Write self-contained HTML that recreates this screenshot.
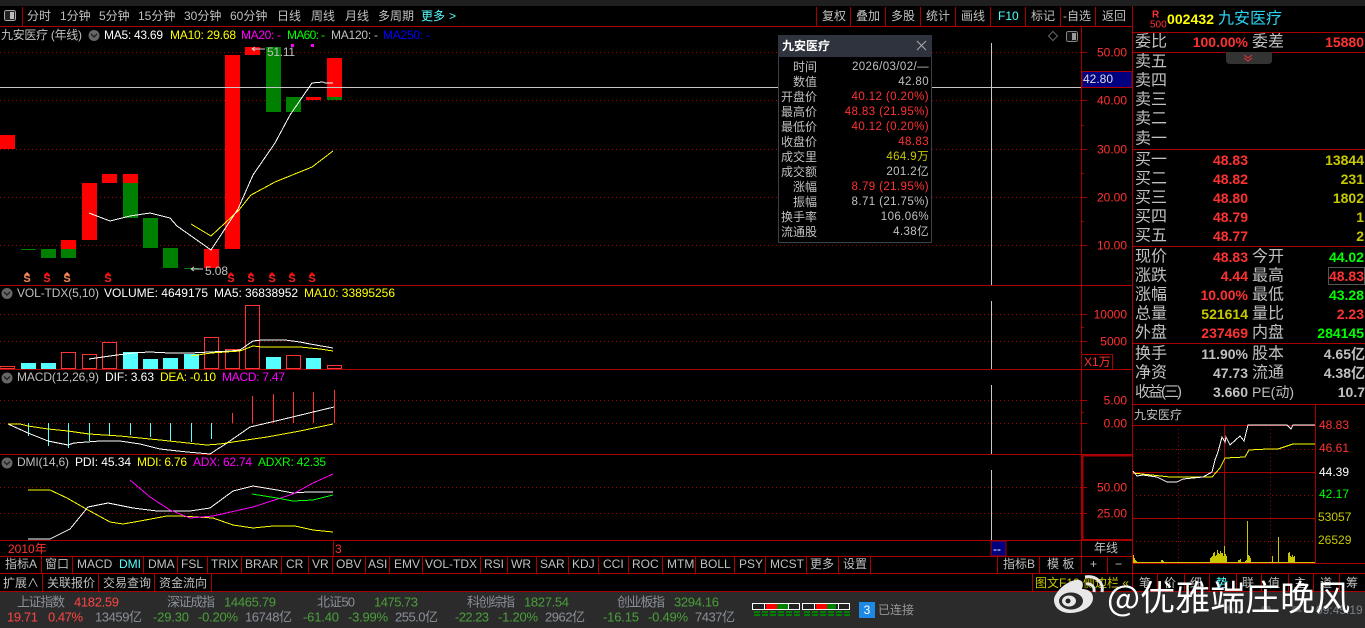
<!DOCTYPE html>
<html><head><meta charset="utf-8"><style>
html,body{margin:0;padding:0;background:#000;width:1365px;height:628px;overflow:hidden}
svg{display:block}
text{font-family:"Liberation Sans","WenQuanYi Zen Hei","Noto Sans CJK SC",sans-serif;font-size:12px;fill:#c0c0c0;dominant-baseline:central;white-space:pre}
.l{stroke:#a00;stroke-width:1;shape-rendering:crispEdges;fill:none}
.d{stroke:#a00;stroke-width:1;stroke-dasharray:1 3;shape-rendering:crispEdges;fill:none}
.p{fill:none;stroke-width:1;shape-rendering:crispEdges}
.c{shape-rendering:crispEdges}
.r{fill:#ff3232}.y{fill:#ff0}.w{fill:#fff}.g{fill:#0f0}.m{fill:#f0f}.b{fill:#00f}.cy{fill:#5ff}.dy{fill:#c8c800}
.e{text-anchor:end}.big{font-size:16px}
.bd{font-weight:bold;font-size:14px}
.pv{font-size:11.5px;letter-spacing:.4px}
.st text{font-size:13px}.sg{fill:#4aa03a}.sr{fill:#f44}.sh{fill:#8a8f98}
</style></head><body>
<svg width="1365" height="628" viewBox="0 0 1365 628" xmlns="http://www.w3.org/2000/svg">
<rect width="1365" height="628" fill="#000"/>
<rect width="1365" height="6" fill="#1f1f1f"/>

<!-- main frame lines -->
<path class="l" d="M0 26.5H1132M0 285.5H1132M0 369.5H1132M0 454.5H1132M0 540.5H1132M0 556.5H1132M0 573.5H1365M1081.5 26V556M1132.5 6V573M22.5 7V26M816.5 7V26M850.5 7V26M885.5 7V26M920.5 7V26M955.5 7V26M990.5 7V26M1025.5 7V26M1060.5 7V26M1095.5 7V26"/>
<path class="l" d="M1132 32.5H1365M1132 52.5H1365M1132 149.5H1365M1132 246.5H1365M1132 343.5H1365M1132 404.5H1365"/>
<path d="M1082 455.5H1132M1082 539.5H1132M1082.5 455V540" stroke="#a00" stroke-width="1.5" fill="none" class="c"/>

<!-- toolbar -->
<rect x="4.500" y="10.500" width="11" height="10" rx="2" fill="#222" stroke="#aaa" class="c"/><rect x="10" y="12" width="4" height="7" fill="#bbb" class="c"/>
<text x="27" y="16">分时</text><text x="60" y="16">1分钟</text><text x="99" y="16">5分钟</text><text x="138" y="16">15分钟</text><text x="184" y="16">30分钟</text><text x="230" y="16">60分钟</text><text x="277" y="16">日线</text><text x="311" y="16">周线</text><text x="345" y="16">月线</text><text x="378" y="16">多周期</text><text x="421" y="16" class="cy">更多</text><text x="449" y="16" class="cy">&gt;</text>
<text x="822" y="16">复权</text><text x="856" y="16">叠加</text><text x="891" y="16">多股</text><text x="926" y="16">统计</text><text x="961" y="16">画线</text><text x="998" y="16" class="cy">F10</text><text x="1031" y="16">标记</text><text x="1063" y="16">-自选</text><text x="1102" y="16">返回</text>

<!-- main header -->
<text x="1" y="35" textLength="81">九安医疗 (年线)</text>
<circle cx="94" cy="35.500" r="5.500" fill="#666"/><path d="M91 34l3 3 3-3" stroke="#222" stroke-width="1.500" fill="none"/>
<text x="104" y="35" class="w" textLength="59">MA5: 43.69</text><text x="170" y="35" class="y" textLength="66">MA10: 29.68</text><text x="241" y="35" class="m" textLength="40">MA20: -</text><text x="287" y="35" class="g" textLength="38">MA60: -</text><text x="331" y="35" textLength="47">MA120: -</text><text x="383" y="35" class="b" textLength="47">MA250: -</text>
<path d="M1048.500 36l4.500-4.500 4.500 4.500-4.500 4.500z" fill="none" stroke="#666"/>
<rect x="1066.500" y="31.500" width="11" height="10" rx="2" fill="#111" stroke="#888" class="c"/><rect x="1072" y="33" width="4" height="7" fill="#999" class="c"/>

<!-- grids -->
<path class="d" d="M0 52.500H1081M0 100.500H1081M0 149.500H1081M0 197.500H1081M0 245.500H1081M0 314.500H1081M0 341.500H1081M0 400.500H1081M0 423.500H1081M0 487.500H1081M0 513.500H1081"/>

<!-- candles -->
<g class="c">
<g fill="#f00"><rect x="0" y="135" width="15" height="14"/><rect x="61" y="240" width="15" height="9"/><rect x="82" y="183" width="15" height="57"/><rect x="102" y="174" width="15" height="9"/><rect x="123" y="174" width="15" height="9"/><rect x="204" y="249" width="15" height="19"/><rect x="225" y="55" width="15" height="194"/><rect x="245" y="47" width="15" height="8"/><rect x="306" y="97" width="15" height="3"/><rect x="327" y="58" width="15" height="39"/></g>
<g fill="#008000"><rect x="21" y="249" width="15" height="1"/><rect x="41" y="249" width="15" height="9"/><rect x="61" y="249" width="15" height="9"/><rect x="123" y="183" width="15" height="35"/><rect x="143" y="218" width="15" height="30"/><rect x="163" y="248" width="15" height="20"/><rect x="184" y="268" width="15" height="1"/><rect x="266" y="47" width="15" height="65"/><rect x="286" y="97" width="15" height="15"/><rect x="327" y="97" width="15" height="3"/></g>
<rect x="291" y="44" width="3" height="3" fill="#f0f"/><rect x="311" y="44" width="3" height="3" fill="#f0f"/>
</g>
<path d="M0 87.500H1081" stroke="#c8c8c8" class="c"/>
<polyline class="p" stroke="#ff0" points="191,224 211,236 239,210 251,195 275,182 312,167 333,151"/>
<polyline class="p" stroke="#fff" points="89,213 110,221 130,216 150,213 170,218 177,226 211,250 238,209 253,175 275,143 290,115 312,83 323,82 325,83 333,83"/>
<path d="M252 49l3-2M252 49l3 2M252 49h13" stroke="#ccc" fill="none"/><text x="267" y="52" style="font-size:12px" textLength="28">51.11</text>
<path d="M191 269l3-2M191 269l3 2M191 269h12" stroke="#ccc" fill="none"/><text x="205" y="271" style="font-size:12px" textLength="23">5.08</text>

<!-- S markers -->
<g style="font-weight:bold" text-anchor="middle">
<path d="M24 275l3-3 3 3zM64 275l3-3 3 3z" fill="#f85"/><path d="M44 275l3-3 3 3zM105 275l3-3 3 3zM228 275l3-3 3 3zM248 275l3-3 3 3zM269 275l3-3 3 3zM289 275l3-3 3 3zM309 275l3-3 3 3z" fill="#f00"/>
<text x="27" y="279" style="fill:#f85;font-size:11px;font-weight:bold">S</text><text x="67" y="279" style="fill:#f85;font-size:11px;font-weight:bold">S</text>
<text x="47" y="279" style="fill:#f22;font-size:11px;font-weight:bold">S</text><text x="108" y="279" style="fill:#f22;font-size:11px;font-weight:bold">S</text><text x="231" y="279" style="fill:#f22;font-size:11px;font-weight:bold">S</text><text x="251" y="279" style="fill:#f22;font-size:11px;font-weight:bold">S</text><text x="272" y="279" style="fill:#f22;font-size:11px;font-weight:bold">S</text><text x="292" y="279" style="fill:#f22;font-size:11px;font-weight:bold">S</text><text x="312" y="279" style="fill:#f22;font-size:11px;font-weight:bold">S</text>
</g>

<!-- volume -->
<circle cx="7" cy="293.500" r="5.500" fill="#666"/><path d="M4 292l3 3 3-3" stroke="#222" stroke-width="1.500" fill="none"/>
<text x="17" y="293" textLength="82">VOL-TDX(5,10)</text><text x="104" y="293" class="w" textLength="104">VOLUME: 4649175</text><text x="214" y="293" class="w" textLength="84">MA5: 36838952</text><text x="304" y="293" class="y" textLength="91">MA10: 33895256</text>
<g class="c" fill="#55ffff"><rect x="21" y="363" width="15" height="6"/><rect x="41" y="363" width="15" height="6"/><rect x="123" y="352" width="15" height="17"/><rect x="143" y="359" width="15" height="10"/><rect x="163" y="358" width="15" height="11"/><rect x="184" y="354" width="15" height="15"/><rect x="266" y="357" width="15" height="12"/><rect x="306" y="358" width="15" height="11"/></g>
<g class="c" fill="none" stroke="#f33"><rect x="0" y="366.500" width="14.500" height="2"/><rect x="61.500" y="352.500" width="14" height="16"/><rect x="82.500" y="354.500" width="14" height="14"/><rect x="102.500" y="342.500" width="14" height="26"/><rect x="204.500" y="337.500" width="14" height="31"/><rect x="225.500" y="349.500" width="14" height="19"/><rect x="245.500" y="305.500" width="14" height="63"/><rect x="286.500" y="355.500" width="14" height="13"/><rect x="327.500" y="365.500" width="14" height="3"/></g>
<polyline class="p" stroke="#fff" points="89,359 117,355 133,353 149,352 170,353 190,353 230,351 240,350 253,341 262,340 285,340 300,342 310,344 333,348"/>
<polyline class="p" stroke="#ff0" points="191,356 211,353 240,351 253,346 262,347 300,347 320,349 333,351"/>

<!-- macd -->
<circle cx="7" cy="378" r="5.500" fill="#666"/><path d="M4 376.500l3 3 3-3" stroke="#222" stroke-width="1.500" fill="none"/>
<text x="17" y="377" textLength="82">MACD(12,26,9)</text><text x="105" y="377" class="w" textLength="49">DIF: 3.63</text><text x="160" y="377" class="y" textLength="56">DEA: -0.10</text><text x="222" y="377" class="m" textLength="63">MACD: 7.47</text>
<path class="c" stroke="#f33" d="M232.500 413V423M252.500 396V423M273.500 394V423M293.500 392V423M313.500 392V423M334.500 390V423"/>
<path class="c" stroke="#55ffff" d="M28.500 423V436M48.500 423V446M68.500 423V448M89.500 423V441M109.500 423V435M130.500 423V435M150.500 423V437M170.500 423V441M191.500 423V442M211.500 423V439"/>
<polyline class="p" stroke="#fff" points="8,424 28,433 48,441 68,445 74,443 100,441 120,441 140,444 160,449 187,452 210,454 227,443 250,427 280,420 334,407"/>
<polyline class="p" stroke="#ff0" points="8,424 20,424 28,426 48,429 68,431 89,434 120,436 160,440 197,444 207,445 220,444 233,442 267,437 300,431 333,424"/>

<!-- dmi -->
<circle cx="7" cy="463" r="5.500" fill="#666"/><path d="M4 461.500l3 3 3-3" stroke="#222" stroke-width="1.500" fill="none"/>
<text x="17" y="462" textLength="52">DMI(14,6)</text><text x="75" y="462" class="w" textLength="56">PDI: 45.34</text><text x="137" y="462" class="y" textLength="50">MDI: 6.76</text><text x="193" y="462" class="m" textLength="59">ADX: 62.74</text><text x="258" y="462" class="g" textLength="68">ADXR: 42.35</text>
<polyline class="p" stroke="#ff0" points="28,490 50,490 67,498 88,510 110,522 123,524 140,521 167,516 180,516 213,518 233,525 253,528 273,526 295,526 313,530 333,532"/>
<polyline class="p" stroke="#fff" points="28,539 50,539 70,529 88,507 108,503 133,508 157,511 177,511 190,511 210,508 233,491 253,486 277,490 293,493 308,492 333,492"/>
<polyline class="p" stroke="#f0f" points="130,480 150,497 170,510 190,518 213,516 253,507 293,494 313,483 333,474"/>
<polyline class="p" stroke="#0f0" points="252,494 277,498 293,501 313,500 333,495"/>

<!-- crosshair vertical -->
<path class="c" stroke="#c8c8c8" d="M991.500 43V285M991.500 301V369M991.500 385V454M991.500 470V540"/>

<!-- axes -->
<path class="l" d="M1081 52.500H1087M1081 100.500H1087M1081 125.500H1084M1081 149.500H1087M1081 173.500H1084M1081 197.500H1087M1081 221.500H1084M1081 245.500H1087M1081 314.500H1087M1081 327.500H1084M1081 341.500H1087M1081 400.500H1087M1081 412.500H1084M1081 423.500H1087M1081 487.500H1087M1081 513.500H1087"/>
<g class="e" text-anchor="end">
<text x="1127" y="52.500" class="r" text-anchor="end">50.00</text><text x="1127" y="100.500" class="r" text-anchor="end">40.00</text><text x="1127" y="149.500" class="r" text-anchor="end">30.00</text><text x="1127" y="197.500" class="r" text-anchor="end">20.00</text><text x="1127" y="245.500" class="r" text-anchor="end">10.00</text><text x="1127" y="314.500" class="r" text-anchor="end">10000</text><text x="1127" y="341.500" class="r" text-anchor="end">5000</text><text x="1127" y="400.500" class="r" text-anchor="end">5.00</text><text x="1127" y="423.500" class="r" text-anchor="end">0.00</text><text x="1127" y="487.500" class="r" text-anchor="end">50.00</text><text x="1127" y="513.500" class="r" text-anchor="end">25.00</text>
</g>
<rect x="1082" y="71.500" width="50" height="16" fill="#000080" stroke="#a00" class="c"/><text x="1083" y="79" style="fill:#ddd">42.80</text>
<path class="l" d="M1082 354.500H1112.500V369"/><text x="1084" y="362" class="r">X1万</text>

<!-- popup -->
<rect x="778.500" y="35.500" width="153" height="207" fill="#000" stroke="#3a4048" class="c"/>
<rect x="778" y="35" width="154" height="22" fill="#2f333d" class="c"/>
<text x="782" y="46" style="fill:#fff;font-weight:bold">九安医疗</text>
<path d="M917 41l9 9M926 41l-9 9" stroke="#aaa" fill="none"/>
<g text-anchor="end">
<text x="817" y="67" text-anchor="end">时间</text><text x="817" y="82" text-anchor="end">数值</text><text x="817" y="97" text-anchor="end">开盘价</text><text x="817" y="112" text-anchor="end">最高价</text><text x="817" y="127" text-anchor="end">最低价</text><text x="817" y="142" text-anchor="end">收盘价</text><text x="817" y="157" text-anchor="end">成交里</text><text x="817" y="172" text-anchor="end">成交额</text><text x="817" y="187" text-anchor="end">涨幅</text><text x="817" y="202" text-anchor="end">振幅</text><text x="817" y="217" text-anchor="end">换手率</text><text x="817" y="232" text-anchor="end">流通股</text>
<text x="929" y="67" text-anchor="end" class="pv">2026/03/02/—</text><text x="929" y="82" text-anchor="end" class="pv">42.80</text><text x="929" y="97" text-anchor="end" class="r pv">40.12 (0.20%)</text><text x="929" y="112" text-anchor="end" class="r pv">48.83 (21.95%)</text><text x="929" y="127" text-anchor="end" class="r pv">40.12 (0.20%)</text><text x="929" y="142" text-anchor="end" class="r pv">48.83</text><text x="929" y="157" text-anchor="end" class="dy pv">464.9万</text><text x="929" y="172" text-anchor="end" class="pv">201.2亿</text><text x="929" y="187" text-anchor="end" class="r pv">8.79 (21.95%)</text><text x="929" y="202" text-anchor="end" class="pv">8.71 (21.75%)</text><text x="929" y="217" text-anchor="end" class="pv">106.06%</text><text x="929" y="232" text-anchor="end" class="pv">4.38亿</text>
</g>

<!-- right panel -->
<text x="1152" y="15" style="fill:#f33;font-size:10px;font-weight:bold">R</text><text x="1150" y="25" style="fill:#f33;font-size:10px">500</text>
<text x="1167" y="19" class="y" style="font-weight:bold;font-size:14px" textLength="47">002432</text>
<text x="1218" y="19" style="fill:#2ad4f0;font-size:16px">九安医疗</text>
<text x="1135" y="42" class="big">委比</text><text x="1248" y="42" class="r bd e" text-anchor="end">100.00%</text><text x="1252" y="42" class="big">委差</text><text x="1364" y="42" class="r bd" text-anchor="end">15880</text>
<path d="M1226 52h46v8q0 4-4 4h-38q-4 0-4-4z" fill="#333"/><path d="M1244 55l4 3 4-3M1244 58l4 3 4-3" stroke="#e33" fill="none"/>
<text x="1135" y="62" class="big">卖五</text><text x="1135" y="81" class="big">卖四</text><text x="1135" y="100" class="big">卖三</text><text x="1135" y="119" class="big">卖二</text><text x="1135" y="139" class="big">卖一</text>
<text x="1135" y="160" class="big">买一</text><text x="1135" y="179" class="big">买二</text><text x="1135" y="198" class="big">买三</text><text x="1135" y="217" class="big">买四</text><text x="1135" y="236" class="big">买五</text>
<g font-weight="bold">
<text x="1248" y="160" class="r bd" text-anchor="end">48.83</text><text x="1248" y="179" class="r bd" text-anchor="end">48.82</text><text x="1248" y="198" class="r bd" text-anchor="end">48.80</text><text x="1248" y="217" class="r bd" text-anchor="end">48.79</text><text x="1248" y="236" class="r bd" text-anchor="end">48.77</text>
<text x="1364" y="160" class="dy bd" text-anchor="end">13844</text><text x="1364" y="179" class="dy bd" text-anchor="end">231</text><text x="1364" y="198" class="dy bd" text-anchor="end">1802</text><text x="1364" y="217" class="dy bd" text-anchor="end">1</text><text x="1364" y="236" class="dy bd" text-anchor="end">2</text>
</g>
<text x="1135" y="257" class="big">现价</text><text x="1135" y="276" class="big">涨跌</text><text x="1135" y="295" class="big">涨幅</text><text x="1135" y="314" class="big">总量</text><text x="1135" y="333" class="big">外盘</text>
<text x="1252" y="257" class="big">今开</text><text x="1252" y="276" class="big">最高</text><text x="1252" y="295" class="big">最低</text><text x="1252" y="314" class="big">量比</text><text x="1252" y="333" class="big">内盘</text>
<text x="1248" y="257" class="r bd" text-anchor="end">48.83</text><text x="1248" y="276" class="r bd" text-anchor="end">4.44</text><text x="1248" y="295" class="r bd" text-anchor="end">10.00%</text><text x="1248" y="314" class="dy bd" text-anchor="end">521614</text><text x="1248" y="333" class="r bd" text-anchor="end">237469</text>
<rect x="1328.500" y="267.500" width="36" height="17" fill="none" stroke="#555" class="c"/>
<text x="1364" y="257" class="g bd" text-anchor="end">44.02</text><text x="1364" y="276" class="r bd" text-anchor="end">48.83</text><text x="1364" y="295" class="g bd" text-anchor="end">43.28</text><text x="1364" y="314" class="r bd" text-anchor="end">2.23</text><text x="1364" y="333" class="g bd" text-anchor="end">284145</text>
<text x="1135" y="354" class="big">换手</text><text x="1135" y="373" class="big">净资</text><text x="1135" y="392" style="font-size:15px" textLength="47">收益(三)</text>
<text x="1252" y="354" class="big">股本</text><text x="1252" y="373" class="big">流通</text><text x="1252" y="392" style="font-size:14px">PE(动)</text>
<text x="1248" y="354" class="bd" text-anchor="end">11.90%</text><text x="1248" y="373" class="bd" text-anchor="end">47.73</text><text x="1248" y="392" class="bd" text-anchor="end">3.660</text>
<text x="1365" y="354" class="bd" text-anchor="end">4.65亿</text><text x="1365" y="373" class="bd" text-anchor="end">4.38亿</text><text x="1365" y="392" class="bd" text-anchor="end">10.7</text>

<!-- mini chart -->
<text x="1134" y="415">九安医疗</text>
<path class="l" d="M1132 425.500H1315M1132 472.500H1315M1132 518.500H1315M1132 563.500H1365M1224.500 425V563M1315.500 404V563"/>
<path class="d" d="M1132 449.500H1315M1132 495.500H1315M1132 541.500H1315M1178.500 425V563M1270.500 425V563"/>
<polyline class="p" stroke="#ff0" points="1133,473 1170,477 1212,477 1220,468 1225,458 1245,457 1249,450 1268,449 1278,449 1293,444 1315,444"/>
<polyline class="p" stroke="#fff" points="1133,471 1137,476 1143,475 1157,477 1167,482 1177,482 1183,479 1203,477 1212,472 1215,460 1218,452 1222,437 1225,442 1226,437 1230,445 1240,436 1244,441 1248,425 1287,425 1291,429 1293,425 1315,425"/>
<path class="c" stroke="#c8c800" stroke-width="1.200" d="M1133 562.500H1315M1133.500 555V563M1134.500 558V563M1135.500 560V563M1136.500 561V563M1161.500 560V563M1162.500 560V563M1163.500 561V563M1210.500 558V563M1211.500 557V563M1212.500 556V563M1213.500 553V563M1214.500 552V563M1215.500 556V563M1216.500 555V563M1217.500 550V563M1218.500 553V563M1219.500 554V563M1220.500 551V563M1221.500 553V563M1222.500 553V563M1223.500 556V563M1224.500 546V563M1225.500 554V563M1226.500 556V563M1238.500 560V563M1239.500 560V563M1240.500 559V563M1245.500 561V563M1246.500 560V563M1247.500 521V563M1248.500 555V563M1249.500 556V563M1250.500 558V563M1272.500 556V563M1278.500 537V563M1288.500 553V563M1289.500 552V563M1290.500 556V563M1291.500 557V563M1292.500 555V563M1293.500 557V563M1294.500 556V563"/>
<text x="1319" y="425" class="r">48.83</text><text x="1319" y="448" class="r">46.61</text><text x="1319" y="472" class="w">44.39</text><text x="1319" y="494" class="g">42.17</text><text x="1318" y="517" class="dy">53057</text><text x="1318" y="540" class="dy">26529</text>

<!-- date row -->
<text x="8" y="549" class="r">2010年</text><path class="l" d="M333.500 541V556"/><text x="335" y="549" class="r">3</text>
<rect x="991" y="541" width="15" height="15" fill="#000080" stroke="#a00" class="c"/><text x="993" y="549" class="w">--</text>
<text x="1094" y="548">年线</text>

<!-- tab row 1 -->
<path class="l" d="M41.500 556V573M72.500 556V573M143.500 556V573M177.500 556V573M207.500 556V573M241.500 556V573M281.500 556V573M308.500 556V573M332.500 556V573M365.500 556V573M389.500 556V573M422.500 556V573M480.500 556V573M507.500 556V573M536.500 556V573M568.500 556V573M598.500 556V573M628.500 556V573M662.500 556V573M695.500 556V573M734.500 556V573M765.500 556V573M806.500 556V573M838.500 556V573M870.500 556V573M997.500 556V573M1039.500 556V573M1081.500 556V573M1107.500 556V573"/>
<g>
<text x="5" y="564">指标A</text><text x="45" y="564">窗口</text><text x="77" y="564">MACD</text><text x="119" y="564" class="cy">DMI</text><text x="148" y="564">DMA</text><text x="181" y="564">FSL</text><text x="211" y="564">TRIX</text><text x="245" y="564">BRAR</text><text x="286" y="564">CR</text><text x="312" y="564">VR</text><text x="336" y="564">OBV</text><text x="368" y="564">ASI</text><text x="394" y="564">EMV</text><text x="425" y="564">VOL-TDX</text><text x="484" y="564">RSI</text><text x="511" y="564">WR</text><text x="540" y="564">SAR</text><text x="572" y="564">KDJ</text><text x="603" y="564">CCI</text><text x="632" y="564">ROC</text><text x="667" y="564">MTM</text><text x="700" y="564">BOLL</text><text x="739" y="564">PSY</text><text x="770" y="564">MCST</text><text x="810" y="564">更多</text><text x="843" y="564">设置</text>
<text x="1003" y="564">指标B</text><text x="1047" y="564">模 板</text><text x="1090" y="564">+</text><text x="1115" y="564">−</text>
</g>

<!-- tab row 2 -->
<path class="l" d="M42.500 573V591M98.500 573V591M154.500 573V591M211.500 573V591M1032.500 573V591M1132.500 573V591M1157.500 573V591M1184.500 573V591M1209.500 573V591M1236.500 573V591M1261.500 573V591M1288.500 573V591M1313.500 573V591M1339.500 573V591M0 591.500H1365"/>
<text x="3" y="583">扩展∧</text><text x="47" y="583">关联报价</text><text x="103" y="583">交易查询</text><text x="159" y="583">资金流向</text>
<text x="1035" y="583" class="dy">图文F10 侧边栏 «</text>
<text x="1139" y="583">笔</text><text x="1164" y="583">价</text><text x="1190" y="583">细</text><text x="1216" y="583" class="cy">势</text><text x="1242" y="583">联</text><text x="1268" y="583">值</text><text x="1294" y="583">主</text><text x="1320" y="583">道</text><text x="1346" y="583">筹</text>

<!-- status bar -->
<rect x="0" y="592" width="1365" height="36" fill="#2b2b2b" class="c"/>
<g class="st">
<text x="17" y="602" class="sh" textLength="48">上证指数</text><text x="74" y="602" class="sr" textLength="45">4182.59</text>
<text x="167" y="602" class="sh" textLength="48">深证成指</text><text x="224" y="602" class="sg" textLength="52">14465.79</text>
<text x="317" y="602" class="sh" textLength="38">北证50</text><text x="374" y="602" class="sg" textLength="44">1475.73</text>
<text x="467" y="602" class="sh" textLength="48">科创综指</text><text x="524" y="602" class="sg" textLength="45">1827.54</text>
<text x="617" y="602" class="sh" textLength="48">创业板指</text><text x="674" y="602" class="sg" textLength="45">3294.16</text>
<text x="7" y="617" class="sr" textLength="31">19.71</text><text x="48" y="617" class="sr" textLength="35">0.47%</text><text x="95" y="617" class="sh" textLength="47">13459亿</text>
<text x="153" y="617" class="sg" textLength="36">-29.30</text><text x="198" y="617" class="sg" textLength="40">-0.20%</text><text x="245" y="617" class="sh" textLength="47">16748亿</text>
<text x="303" y="617" class="sg" textLength="36">-61.40</text><text x="348" y="617" class="sg" textLength="40">-3.99%</text><text x="395" y="617" class="sh" textLength="43">255.0亿</text>
<text x="455" y="617" class="sg" textLength="34">-22.23</text><text x="498" y="617" class="sg" textLength="40">-1.20%</text><text x="545" y="617" class="sh" textLength="40">2962亿</text>
<text x="603" y="617" class="sg" textLength="36">-16.15</text><text x="648" y="617" class="sg" textLength="40">-0.49%</text><text x="695" y="617" class="sh" textLength="40">7437亿</text>
</g>
<g class="c">
<rect x="752.500" y="603.500" width="47" height="6" fill="#222" stroke="#fff"/><rect x="802.500" y="603.500" width="47" height="6" fill="#222" stroke="#fff"/>
<path stroke="#fff" d="M764.500 603V610M788.500 603V610M814.500 603V610M838.500 603V610"/>
<rect x="766" y="604" width="11" height="5" fill="#f00"/><rect x="777" y="604" width="11" height="5" fill="#008000"/><rect x="816" y="604" width="11" height="5" fill="#f00"/><rect x="827" y="604" width="9" height="5" fill="#008000"/>
<path stroke="#008000" stroke-width="2" stroke-dasharray="6 2" d="M754 612H800M804 612H850M754 615H800M804 615H850"/>
<rect x="859" y="602" width="16" height="16" fill="#1e88e5"/>
</g>
<text x="867" y="610" class="w" text-anchor="middle" style="font-size:12px">3</text>
<text x="878" y="610" style="fill:#999">已连接</text>
<text x="1316" y="610" style="fill:#7a8088;font-size:12px">09:45:19</text>
<path d="M1230 604l6 8-4 2-6-6zM1262 606h8l2 6h-12zM1293 606h6l3 6h-12z" fill="#555"/>

<!-- watermark -->
<g>
<path d="M1054 600c0-7 12-19 22-20 7-1 8 4 6 9 6 0 11 3 11 9 0 9-12 15-23 15-9 0-16-5-16-13z" fill="#e8e8e8"/>
<ellipse cx="1071" cy="601" rx="12" ry="8.500" fill="#2b2b2b"/>
<ellipse cx="1069" cy="601" rx="7" ry="5.500" fill="#e8e8e8"/><circle cx="1068" cy="601" r="2.500" fill="#222"/>
<path d="M1085 577c10-2 19 5 17 15M1086 584c5-1 9 3 8 8" stroke="#e8e8e8" stroke-width="3" fill="none"/>
<text x="1107" y="596" style="fill:#fff;font-size:35px;font-family:'Noto Sans CJK SC','Liberation Sans',sans-serif">@优雅端庄晚风</text>
</g>
</svg>
</body></html>
